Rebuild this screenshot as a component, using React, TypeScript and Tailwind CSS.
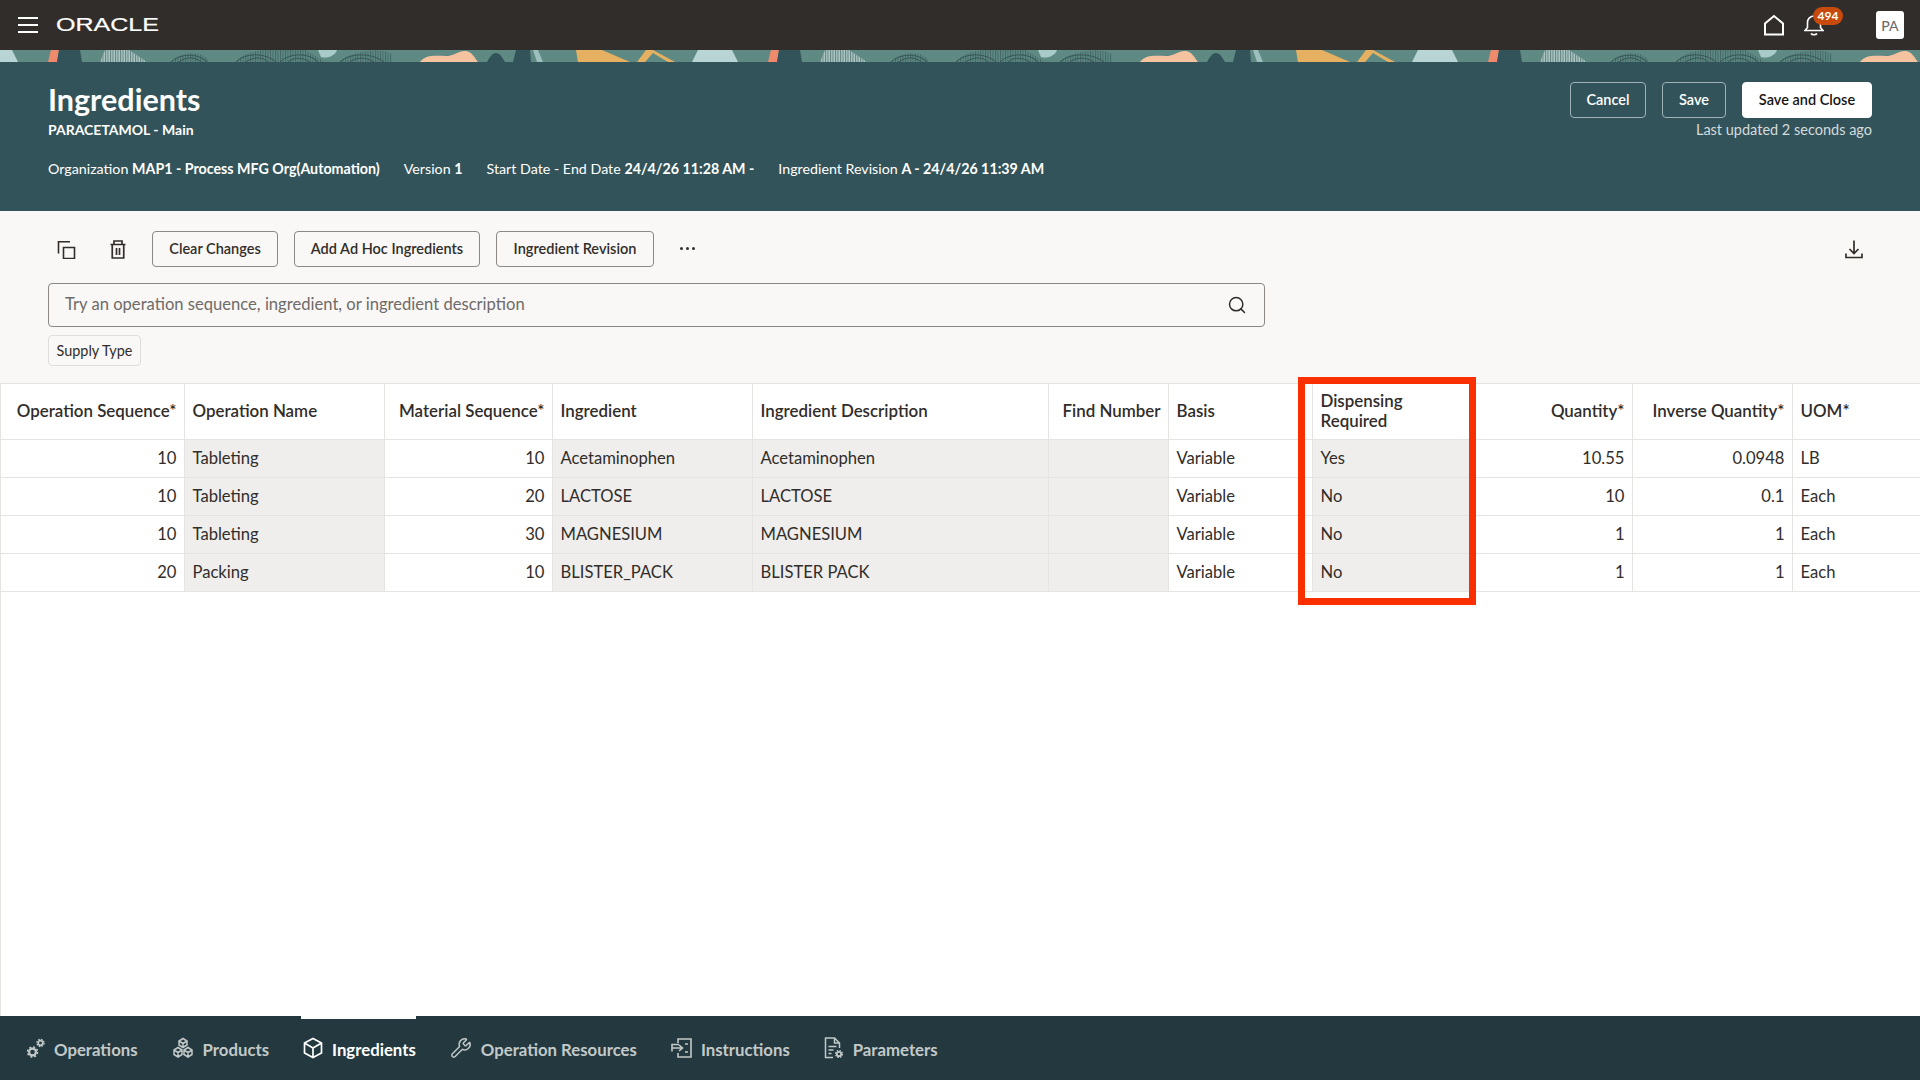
import { Search, Wrench } from "lucide-react"

const font = "font-['Lato','Noto_Sans',sans-serif]"

const columns = [
  { label: "Operation Sequence*", width: "w-[183px]", right: true },
  { label: "Operation Name", width: "w-[200px]", grey: true },
  { label: "Material Sequence*", width: "w-[168px]", right: true },
  { label: "Ingredient", width: "w-[200px]", grey: true },
  { label: "Ingredient Description", width: "w-[296px]", grey: true },
  { label: "Find Number", width: "w-[120px]", grey: true, right: true },
  { label: "Basis", width: "w-[144px]" },
  { label: "Dispensing Required", width: "w-[157px]", grey: true },
  { label: "Quantity*", width: "w-[163px]", right: true },
  { label: "Inverse Quantity*", width: "w-[160px]", right: true },
  { label: "UOM*", width: "" },
]

const rows = [
  ["10", "Tableting", "10", "Acetaminophen", "Acetaminophen", "", "Variable", "Yes", "10.55", "0.0948", "LB"],
  ["10", "Tableting", "20", "LACTOSE", "LACTOSE", "", "Variable", "No", "10", "0.1", "Each"],
  ["10", "Tableting", "30", "MAGNESIUM", "MAGNESIUM", "", "Variable", "No", "1", "1", "Each"],
  ["20", "Packing", "10", "BLISTER_PACK", "BLISTER PACK", "", "Variable", "No", "1", "1", "Each"],
]

function BannerTile({ x }: { x: number }) {
  return (
    <g transform={`translate(${x} 0)`}>
      <path d="M-22 0h34l6 12H-28z" fill="#b9d4d5" />
      <path d="M51 0h8l-2 12h-9z" fill="#f08a6c" />
      <path d="M59 0h21l2 12H57z" fill="#33535a" />
      <path d="M105 0h24l18 12h-47z" fill="#a9c6c2" />
      <path d="M105 0h24l18 12h-47z" fill="url(#hatch)" />
      <path d="M171 12c6-9 28-13 37-3v3zM236 12c8-14 50-16 70-12l19 12zM340 12c4-9 40-16 52-8v8z" fill="url(#hatch)" />
      <path d="M171 12c8-8 26-10 36 0M179 12c6-5 16-6 22 0M236 12c9-9 28-10 40 0M246 12c6-5 16-6 22 0M280 12c9-9 28-10 38 0M288 12c6-5 14-5 22 0M340 12c10-9 30-10 44 0M350 12c6-5 16-5 24 0" fill="none" stroke="#2d4a4d" strokeWidth="0.8" />
      <path d="M318 0h19c-2 6-10 9-16 7z" fill="#a9cbc8" />
      <path d="M420 12c6-8 16-6 26-6 8 0 14-6 20-5 6 1 9 7 12 11z" fill="#f5c3a0" />
      <path d="M487 12c3-5 5-9 9-9s6 4 9 9z" fill="#33535a" />
      <path d="M516 0h14l1 12h-18z" fill="#33535a" />
      <path d="M533 0h5l5 12h-6z" fill="#9dbfbd" />
      <path d="M576 0h26l28 12h-52z" fill="#e5b160" />
      <path d="M637 12l9-12h7l22 12h-7l-15-9-8 9z" fill="#e5b160" />
    </g>
  )
}

function Banner() {
  return (
    <svg className="block h-[12px] w-full shrink-0 bg-[#5f8a84]" viewBox="0 0 1920 12" preserveAspectRatio="none">
      <defs>
        <pattern id="hatch" width="2.5" height="12" patternUnits="userSpaceOnUse">
          <rect width="1" height="12" fill="#2d4a4d" opacity="0.55" />
        </pattern>
      </defs>
      <BannerTile x={0} />
      <BannerTile x={720} />
      <BannerTile x={1440} />
    </svg>
  )
}

function OutlineButton({ label, className }: { label: string; className: string }) {
  return (
    <button className={`flex h-[36px] items-center justify-center rounded-[4px] border text-[14.5px] font-semibold ${className}`}>
      {label}
    </button>
  )
}

function NavTab({ icon, label, active }: { icon: React.ReactNode; label: string; active?: boolean }) {
  return (
    <div className={`relative flex h-full items-center gap-[9px] ${active ? "text-white" : "text-[#c3c9c9]"}`}>
      {active && <div className="absolute left-[-2px] right-0 top-0 h-[3px] bg-white" />}
      {icon}
      <span className="pt-[3px] text-[16.75px] font-bold">{label}</span>
    </div>
  )
}

export default function App() {
  return (
    <div className={`flex h-screen w-full flex-col overflow-hidden bg-[#f9f8f6] text-[#312d2a] ${font}`}>
      <div className="flex h-[50px] shrink-0 items-center bg-[#312d2a] pl-[18px] pr-[16px]">
        <svg width="20" height="16" viewBox="0 0 20 16" fill="none" stroke="#fff" strokeWidth="2">
          <path d="M0 1h20M0 8h20M0 15h20" />
        </svg>
        <svg className="ml-[18px]" width="104" height="20" viewBox="0 0 104 20">
          <text x="0" y="16" fontFamily="Liberation Sans" fontSize="17.5" fill="#fff" stroke="#fff" strokeWidth="0.2" textLength="103" lengthAdjust="spacingAndGlyphs">
            ORACLE
          </text>
        </svg>
        <div className="ml-auto flex items-center">
          <svg width="22" height="22" viewBox="0 0 22 22" fill="none" stroke="#fff" strokeWidth="2">
            <path d="M2 20.5V9.5L11 2l9 7.5v11z" />
          </svg>
          <div className="relative ml-[19px] mr-[52px]">
            <svg width="20" height="22" viewBox="0 0 20 22" fill="none" stroke="#fff" strokeWidth="1.6" className="block">
              <path d="M1 16.5h18l-2.5-3V8.5a6.5 6.5 0 0 0-13 0v5zM7 19.5c1 1.6 5 1.6 6 0" />
            </svg>
            <span className="absolute left-[9px] top-[-7px] flex h-[18px] w-[30px] items-center justify-center rounded-full bg-[#c74a0c] text-[12px] font-bold text-white">
              494
            </span>
          </div>
          <div className="flex h-[28px] w-[28px] items-center justify-center rounded-[3px] bg-white text-[14px] font-medium text-[#6f6b68]">
            PA
          </div>
        </div>
      </div>

      <Banner />

      <div className="flex h-[149px] shrink-0 justify-between bg-[#33535a] px-[48px] pt-[20px] text-white">
        <div>
          <h1 className="-mt-[1px] text-[30.5px] font-bold leading-[36px]">Ingredients</h1>
          <div className="mt-[4px] text-[14px] font-bold leading-[18px]">PARACETAMOL - Main</div>
          <div className="mt-[20px] flex gap-[24px] text-[14.25px] leading-[20px]">
            <span>
              Organization <b>MAP1 - Process MFG Org(Automation)</b>
            </span>
            <span>
              Version <b>1</b>
            </span>
            <span>
              Start Date - End Date <b>24/4/26 11:28 AM -</b>
            </span>
            <span>
              Ingredient Revision <b>A - 24/4/26 11:39 AM</b>
            </span>
          </div>
        </div>
        <div className="flex flex-col items-end">
          <div className="flex gap-[16px]">
            <OutlineButton label="Cancel" className="w-[76px] border-[#9fb2b5]" />
            <OutlineButton label="Save" className="w-[64px] border-[#9fb2b5]" />
            <OutlineButton label="Save and Close" className="w-[130px] border-white bg-white text-[#161513]" />
          </div>
          <div className="mt-[2px] text-[14.5px] leading-[20px] text-[#d3dbdc]">Last updated 2 seconds ago</div>
        </div>
      </div>

      <div className="flex h-[172px] shrink-0 flex-col px-[48px] pt-[20px]">
        <div className="flex h-[35px] items-center">
          <svg className="ml-[8px]" width="20" height="20" viewBox="0 0 20 20" fill="none" stroke="#312d2a" strokeWidth="1.6">
            <path d="M7.5 8.5h11v11h-11zM2.5 14.5V2.75H14" />
          </svg>
          <svg className="ml-[32px]" width="20" height="20" viewBox="0 0 20 20" fill="none" stroke="#312d2a" strokeWidth="1.7">
            <path d="M2.5 5.5h15M6 5V2h8v3M4.25 5.5V19h11.5V5.5M8.5 9v7M11.5 9v7" />
          </svg>
          <OutlineButton label="Clear Changes" className="ml-[24px] h-[35px] w-[126px] border-[#8b8885] text-[#312d2a]" />
          <OutlineButton label="Add Ad Hoc Ingredients" className="ml-[16px] h-[35px] w-[186px] border-[#8b8885] text-[#312d2a]" />
          <OutlineButton label="Ingredient Revision" className="ml-[16px] h-[35px] w-[158px] border-[#8b8885] text-[#312d2a]" />
          <div className="ml-[26px] flex gap-[3px]">
            <span className="h-[3px] w-[3px] rounded-full bg-[#312d2a]" />
            <span className="h-[3px] w-[3px] rounded-full bg-[#312d2a]" />
            <span className="h-[3px] w-[3px] rounded-full bg-[#312d2a]" />
          </div>
          <svg className="ml-auto mr-[8px]" width="20" height="20" viewBox="0 0 20 20" fill="none" stroke="#312d2a" strokeWidth="1.7">
            <path d="M10 1.5v13M5.5 10 10 14.5l4.5-4.5M2 14.5v4h16v-4" />
          </svg>
        </div>
        <div className="mt-[17px] flex h-[44px] w-[1217px] items-center justify-between rounded-[4px] border border-[#8b8885] pl-[16px] pr-[17px] text-[16.6px] text-[#6f6b68]">
          <span className="pb-[2px]">Try an operation sequence, ingredient, or ingredient description</span>
          <Search size={20} strokeWidth={1.8} className="text-[#312d2a]" />
        </div>
        <div className="mt-[8px] flex h-[31px] w-[93px] items-center justify-center rounded-[4px] border border-[#dfdedb] text-[14.4px]">
          Supply Type
        </div>
      </div>

      <div className="relative min-h-0 flex-1 border-l border-t border-[#e5e4e2] bg-white">
        <table className="w-full table-fixed border-collapse text-[16.6px]">
          <colgroup>
            {columns.map((c) => (
              <col key={c.label} className={c.width} />
            ))}
          </colgroup>
          <thead>
            <tr className="h-[55px]">
              {columns.map((c) => (
                <th
                  key={c.label}
                  className={`whitespace-normal border-b border-r border-[#e5e4e2] pl-[8px] text-[16.9px] font-semibold leading-[20px] last:border-r-0 ${c.right ? "pr-[7px] text-right" : "pr-[8px] text-left"}`}
                >
                  {c.label}
                </th>
              ))}
            </tr>
          </thead>
          <tbody>
            {rows.map((row, i) => (
              <tr key={i} className="h-[38px]">
                {row.map((cell, j) => (
                  <td
                    key={j}
                    className={`border-b border-r border-[#e5e4e2] pl-[8px] last:border-r-0 ${columns[j].right ? "pr-[7px] text-right" : "pr-[8px] text-left"} ${columns[j].grey ? "bg-[#efeeec]" : ""}`}
                  >
                    {cell}
                  </td>
                ))}
              </tr>
            ))}
          </tbody>
        </table>
        <div className="pointer-events-none absolute left-[1297px] top-[-7px] h-[228px] w-[178px] border-[7px] border-[#fa2f00]" />
      </div>

      <div className="flex h-[64px] shrink-0 items-center gap-[34px] bg-[#23393f] pl-[27px]">
        <NavTab
          label="Operations"
          icon={
            <svg width="18" height="20" viewBox="0 0 18 20" fill="none" stroke="currentColor">
              <circle cx="5.5" cy="14" r="3.4" strokeWidth="2.2" />
              <circle cx="5.5" cy="14" r="5" strokeWidth="1.6" strokeDasharray="2 1.93" />
              <circle cx="13.5" cy="5" r="2.3" strokeWidth="1.7" />
              <circle cx="13.5" cy="5" r="3.6" strokeWidth="1.3" strokeDasharray="1.6 1.23" />
            </svg>
          }
        />
        <NavTab
          label="Products"
          icon={
            <svg width="22" height="22" viewBox="0 0 22 22" fill="none" stroke="currentColor" strokeWidth="1.5">
              <path d="M11 1.5 15 4v4l-4 2.5L7 8V4zM7 4l4 2.5L15 4M11 6.5v4M6 10.5 10 13v4.5L6 20l-4-2.5V13zM2 13l4 2.5L10 13M6 15.5V20M16 10.5 20 13v4.5L16 20l-4-2.5V13zM12 13l4 2.5 4-2.5M16 15.5V20" />
            </svg>
          }
        />
        <NavTab
          active
          label="Ingredients"
          icon={
            <svg width="20" height="22" viewBox="0 0 20 22" fill="none" stroke="currentColor" strokeWidth="1.7">
              <path d="M10 1.5 18.5 6v10L10 20.5 1.5 16V6zM1.5 6 10 11l8.5-5M10 11v9.5" />
            </svg>
          }
        />
        <NavTab label="Operation Resources" icon={<Wrench size={22} strokeWidth={1.6} />} />
        <NavTab
          label="Instructions"
          icon={
            <svg width="21" height="20" viewBox="0 0 21 20" fill="none" stroke="currentColor" strokeWidth="1.6">
              <path d="M7 5V1h13v18H7v-4M1 10h10M8 6.5h-7v7M8 7l3.5 3L8 13M14 6h3M14 14h3" />
            </svg>
          }
        />
        <NavTab
          label="Parameters"
          icon={
            <svg width="20" height="22" viewBox="0 0 20 22" fill="none" stroke="currentColor" strokeWidth="1.5">
              <path d="M9 20.5H1.5V1h9l5 5v5M10.5 1v5h5M4.5 9.5h8M4.5 13h5M4.5 16.5h3" />
              <circle cx="15" cy="17" r="2.2" strokeWidth="1.8" />
              <circle cx="15" cy="17" r="3.5" strokeWidth="1.2" strokeDasharray="1.5 1.25" />
            </svg>
          }
        />
      </div>
    </div>
  )
}
